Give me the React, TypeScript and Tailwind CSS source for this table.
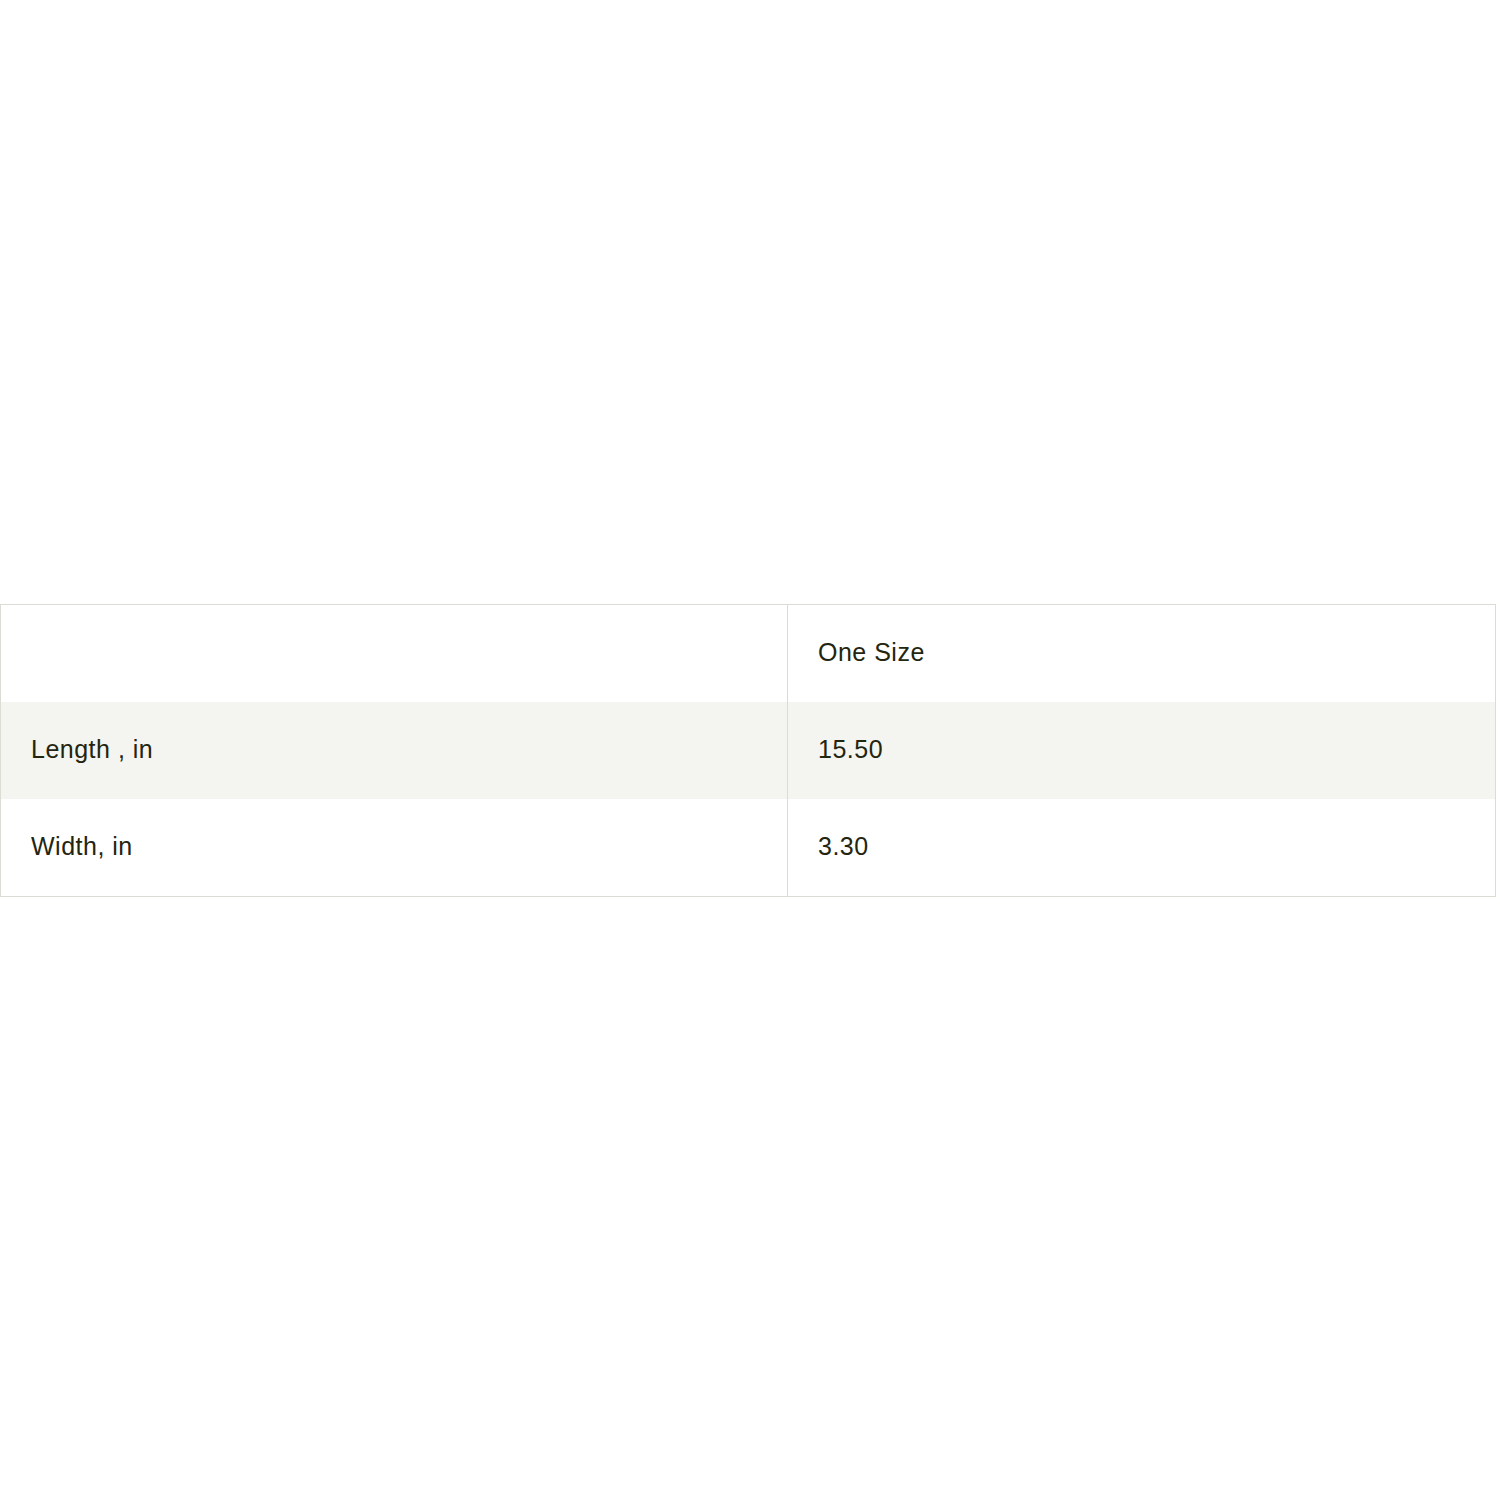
import React from 'react'

const rows = [
  { label: '', value: 'One Size', shaded: false },
  { label: 'Length , in', value: '15.50', shaded: true },
  { label: 'Width, in', value: '3.30', shaded: false }
]

const App: React.FC = () => {
  return (
    <div className="min-h-screen w-[1500px] bg-white flex items-center">
      <div className="w-[1496px] border border-[#dcdcd4] text-[#23250f] text-[25px] tracking-[0.5px] font-['Liberation_Sans',Arial,sans-serif]">
        {rows.map((row, i) => (
          <div
            key={i}
            className={`grid grid-cols-[787px_1fr] h-[97px] ${row.shaded ? 'bg-[#f4f4f0]' : 'bg-white'}`}
          >
            <div className="flex items-center pl-[30px] border-r border-[#dcdcd4]">{row.label}</div>
            <div className="flex items-center pl-[30px]">{row.value}</div>
          </div>
        ))}
      </div>
    </div>
  )
}

export default App
